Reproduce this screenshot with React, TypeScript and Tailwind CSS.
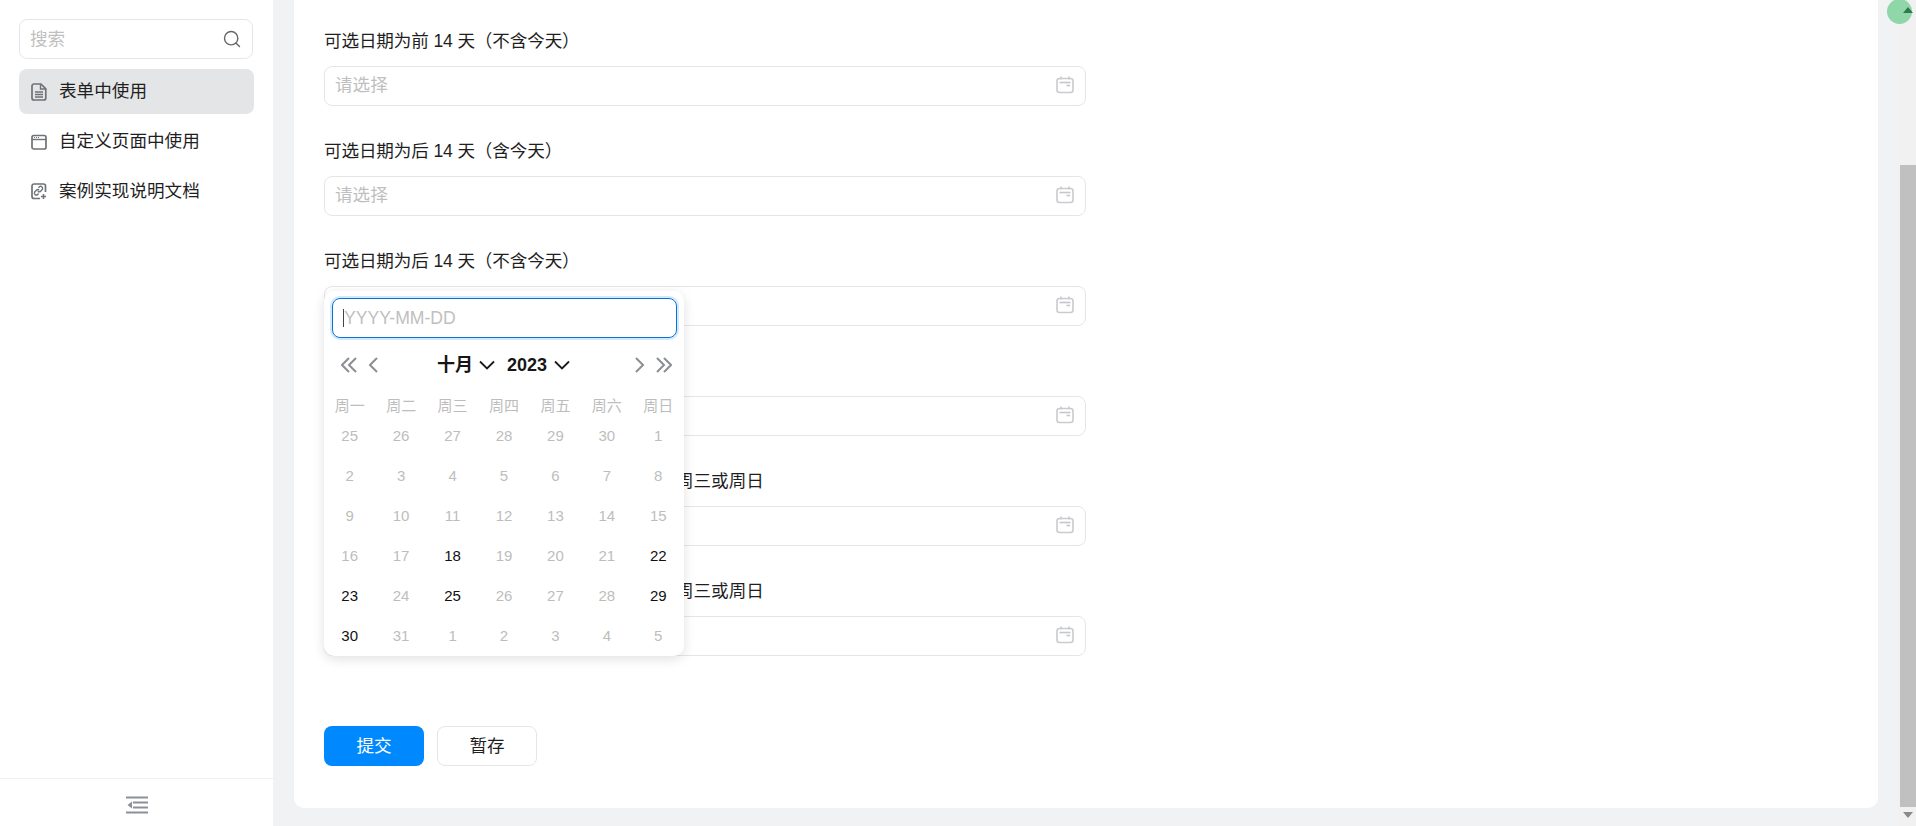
import { Search } from "lucide-react";

const font = "font-['Liberation_Sans','Noto_Sans_CJK_SC',sans-serif]";

function CalendarIcon() {
  return (
    <svg width="18" height="18" viewBox="0 0 18 18" fill="none" className="shrink-0">
      <rect x="1" y="2.5" width="16" height="14" rx="2.5" stroke="#c9cbcf" strokeWidth="1.6" />
      <path d="M5 0.5v3M13 0.5v3" stroke="#c9cbcf" strokeWidth="1.6" />
      <path d="M3.5 6.5h11" stroke="#c4c6ca" strokeWidth="1.6" />
      <path d="M10.5 9.5h3.5" stroke="#c4c6ca" strokeWidth="1.6" />
    </svg>
  );
}

function FileIcon() {
  return (
    <svg width="16" height="18" viewBox="0 0 16 18" fill="none">
      <path d="M3 1h7l4.8 4.8V15a2 2 0 0 1-2 2H3a2 2 0 0 1-2-2V3a2 2 0 0 1 2-2z" stroke="#6f7276" strokeWidth="1.7" />
      <path d="M9.5 1.5V6h4.8" stroke="#6f7276" strokeWidth="1.4" />
      <path d="M4 9h8M4 11.5h8M4 14h8" stroke="#6f7276" strokeWidth="1.3" />
    </svg>
  );
}

function WindowIcon() {
  return (
    <svg width="16" height="16" viewBox="0 0 16 16" fill="none">
      <rect x="1" y="1.5" width="14" height="13.5" rx="1.8" stroke="#6f7276" strokeWidth="1.7" />
      <path d="M1 5.5h14" stroke="#6f7276" strokeWidth="1.4" />
      <path d="M3 3.5h1M5 3.5h1M7 3.5h1" stroke="#6f7276" strokeWidth="1" />
    </svg>
  );
}

function LinkPlusIcon() {
  return (
    <svg width="16" height="17" viewBox="0 0 16 17" fill="none">
      <path d="M9 15.5H3a2 2 0 0 1-2-2V3a2 2 0 0 1 2-2h9.5a2 2 0 0 1 2 2v6" stroke="#6f7276" strokeWidth="1.7" />
      <path d="M7.4 4.8l1-1a2 2 0 0 1 2.8 2.8l-1.6 1.6a2 2 0 0 1-2.8 0" stroke="#6f7276" strokeWidth="1.4" />
      <path d="M7.6 10.6l-1 1A2 2 0 0 1 3.8 8.8l1.6-1.6a2 2 0 0 1 2.8 0" stroke="#6f7276" strokeWidth="1.4" />
      <path d="M12.5 11v5M10 13.5h5" stroke="#6f7276" strokeWidth="1.5" />
    </svg>
  );
}

function OutdentIcon() {
  return (
    <svg width="22" height="18" viewBox="0 0 22 18" fill="none">
      <path d="M0 1.5h22M7 6.5h15M7 11.5h15M0 16.5h22" stroke="#8c9196" strokeWidth="2.2" />
      <path d="M1.5 9L6 5.5v7z" fill="#8c9196" />
    </svg>
  );
}

function Chevron({ dir, double, dark }: { dir: "l" | "r" | "d"; double?: boolean; dark?: boolean }) {
  const c = dark ? "#1a1a1a" : "#8b8e93";
  if (dir === "d")
    return (
      <svg width="16" height="10" viewBox="0 0 16 10" fill="none" className="shrink-0">
        <path d="M1 1.5l7 7 7-7" stroke={c} strokeWidth="1.8" />
      </svg>
    );
  const flip = dir === "r" ? "-scale-x-100" : "";
  if (double)
    return (
      <svg width="16" height="16" viewBox="0 0 16 16" fill="none" className={flip}>
        <path d="M8 1L1 8l7 7M15 1L8 8l7 7" stroke={c} strokeWidth="2" />
      </svg>
    );
  return (
    <svg width="10" height="16" viewBox="0 0 10 16" fill="none" className={flip}>
      <path d="M9 1L2 8l7 7" stroke={c} strokeWidth="2" />
    </svg>
  );
}

const rows = [
  { label: "可选日期为前 14 天（不含今天）", tight: true },
  { label: "可选日期为后 14 天（含今天）", tight: true },
  { label: "可选日期为后 14 天（不含今天）", tight: true },
  { label: "可选日期为前后 14 天（含今天）", tight: true },
  { label: "可选日期为当前月份并含今天，且只可以选择周三或周日", tight: false },
  { label: "可选日期为当前月份不含今天，且只可以选择周三或周日", tight: false },
];

const weekdays = ["周一", "周二", "周三", "周四", "周五", "周六", "周日"];
const days = [
  25, 26, 27, 28, 29, 30, 1, 2, 3, 4, 5, 6, 7, 8, 9, 10, 11, 12, 13, 14, 15, 16, 17, 18, 19, 20, 21, 22, 23, 24, 25, 26,
  27, 28, 29, 30, 31, 1, 2, 3, 4, 5,
];
const enabled = new Set([23, 27, 28, 30, 34, 35]);

function Popup() {
  return (
    <div className="absolute left-[30px] top-[291px] w-[360px] h-[365px] bg-white rounded-[10px] shadow-[0_3px_12px_rgba(0,0,0,0.12)]">
      <div className="mx-[8px] mt-[7px] h-[40px] w-[345px] rounded-[8px] border-[1.5px] border-[#0a73d2] shadow-[0_0_0_2px_rgba(0,133,255,0.18)] flex items-center pl-[10px] text-[17.6px] text-[#bfbfbf]">
        <span className="w-px h-[18px] bg-[#444]"></span>
        YYYY-MM-DD
      </div>
      <div className="relative h-[16px] mt-[19px] flex items-center justify-between pl-[17px] pr-[12px]">
        <div className="flex items-center gap-[11px]">
          <Chevron dir="l" double />
          <Chevron dir="l" />
        </div>
        <div className="flex items-center gap-[11px]">
          <Chevron dir="r" />
          <Chevron dir="r" double />
        </div>
        <div className="absolute left-[113px] top-0 h-[16px] flex items-center text-[18px] font-bold text-[#161616]">
          <span className="w-[36px]">十月</span>
          <span className="ml-[6px]"><Chevron dir="d" dark /></span>
          <span className="ml-[12px] w-[40px]">2023</span>
          <span className="ml-[7px]"><Chevron dir="d" dark /></span>
        </div>
      </div>
      <div className="grid grid-cols-7 mt-[21px] h-[24px] items-center text-center text-[15px] text-[#bdbdbd]">
        {weekdays.map((w) => (
          <div key={w}>{w}</div>
        ))}
      </div>
      <div className="grid grid-cols-7 auto-rows-[40px] -mt-[2px] items-center text-center text-[15px]">
        {days.map((d, i) => (
          <div key={i} className={enabled.has(i) ? "text-[#111]" : "text-[#bdbdbd]"}>
            {d}
          </div>
        ))}
      </div>
    </div>
  );
}

export default function App() {
  return (
    <div className={`${font} flex h-[826px] w-[1916px] overflow-hidden bg-[#f1f2f4] text-[17.6px] text-[#1f1f1f]`}>
      <aside className="w-[273px] shrink-0 bg-white flex flex-col">
        <div className="flex-1 pl-[19px] pr-[19px] pt-[19px]">
          <div className="w-[234px] h-[40px] rounded-[8px] border border-[#e5e6e8] flex items-center justify-between pl-[10px] pr-[10px]">
            <span className="text-[#bfbfbf]">搜索</span>
            <Search size={20} strokeWidth={1.7} color="#666" />
          </div>
          <div className="mt-[10px] flex flex-col gap-[5px]">
            <div className="h-[45px] rounded-[8px] bg-[#e4e5e7] flex items-center pl-[12px]">
              <FileIcon />
              <span className="ml-[12px]">表单中使用</span>
            </div>
            <div className="h-[45px] rounded-[8px] flex items-center pl-[12px]">
              <WindowIcon />
              <span className="ml-[12px]">自定义页面中使用</span>
            </div>
            <div className="h-[45px] rounded-[8px] flex items-center pl-[12px]">
              <LinkPlusIcon />
              <span className="ml-[12px]">案例实现说明文档</span>
            </div>
          </div>
        </div>
        <div className="h-[48px] border-t border-[#eeeff1] flex items-center justify-center pt-[4px]">
          <OutdentIcon />
        </div>
      </aside>

      <main className="flex-1 pl-[21px] pr-[20px] pb-[18px]">
        <div className="relative h-full bg-white rounded-b-[10px] pl-[30px] pt-[29px]">
          {rows.map((r) => (
            <div key={r.label} className="h-[110px]">
              <div className={`h-[24px] leading-[24px] mb-[13px] whitespace-nowrap ${r.tight ? "tracking-[-0.15px]" : ""}`}>
                {r.label}
              </div>
              <div className="w-[762px] h-[40px] rounded-[8px] border border-[#e5e6e8] flex items-center justify-between pl-[10px] pr-[11px]">
                <span className="text-[#bfbfbf] -mt-[1px]">请选择</span>
                <span className="-mt-[2px]"><CalendarIcon /></span>
              </div>
            </div>
          ))}
          <div className="flex gap-[13px] mt-[37px]">
            <button className="w-[100px] h-[40px] rounded-[8px] bg-[#0089ff] text-white">提交</button>
            <button className="w-[100px] h-[40px] rounded-[8px] border border-[#e5e6e8] bg-white">暂存</button>
          </div>
          <Popup />
        </div>
      </main>

      <div className="relative w-[18px] shrink-0 bg-[#f1f1f1] flex flex-col">
        <div className="absolute left-[-11px] top-[-1px] w-[25px] h-[25px] rounded-full bg-[#8fd6a8]"></div>
        <div className="relative h-[17px] shrink-0">
          <svg width="10" height="6" viewBox="0 0 10 6" className="absolute left-[5px] top-[7px]">
            <path d="M5 0l5 6H0z" fill="#2f7a4c" />
          </svg>
        </div>
        <div className="flex-1 pl-[2px] pt-[148px]">
          <div className="h-[642px] bg-[#c0c0c0]"></div>
        </div>
        <div className="relative h-[19px] shrink-0">
          <svg width="10" height="6" viewBox="0 0 10 6" className="absolute left-[5px] top-[5px]">
            <path d="M0 0h10L5 6z" fill="#8a8a8a" />
          </svg>
        </div>
      </div>
    </div>
  );
}
